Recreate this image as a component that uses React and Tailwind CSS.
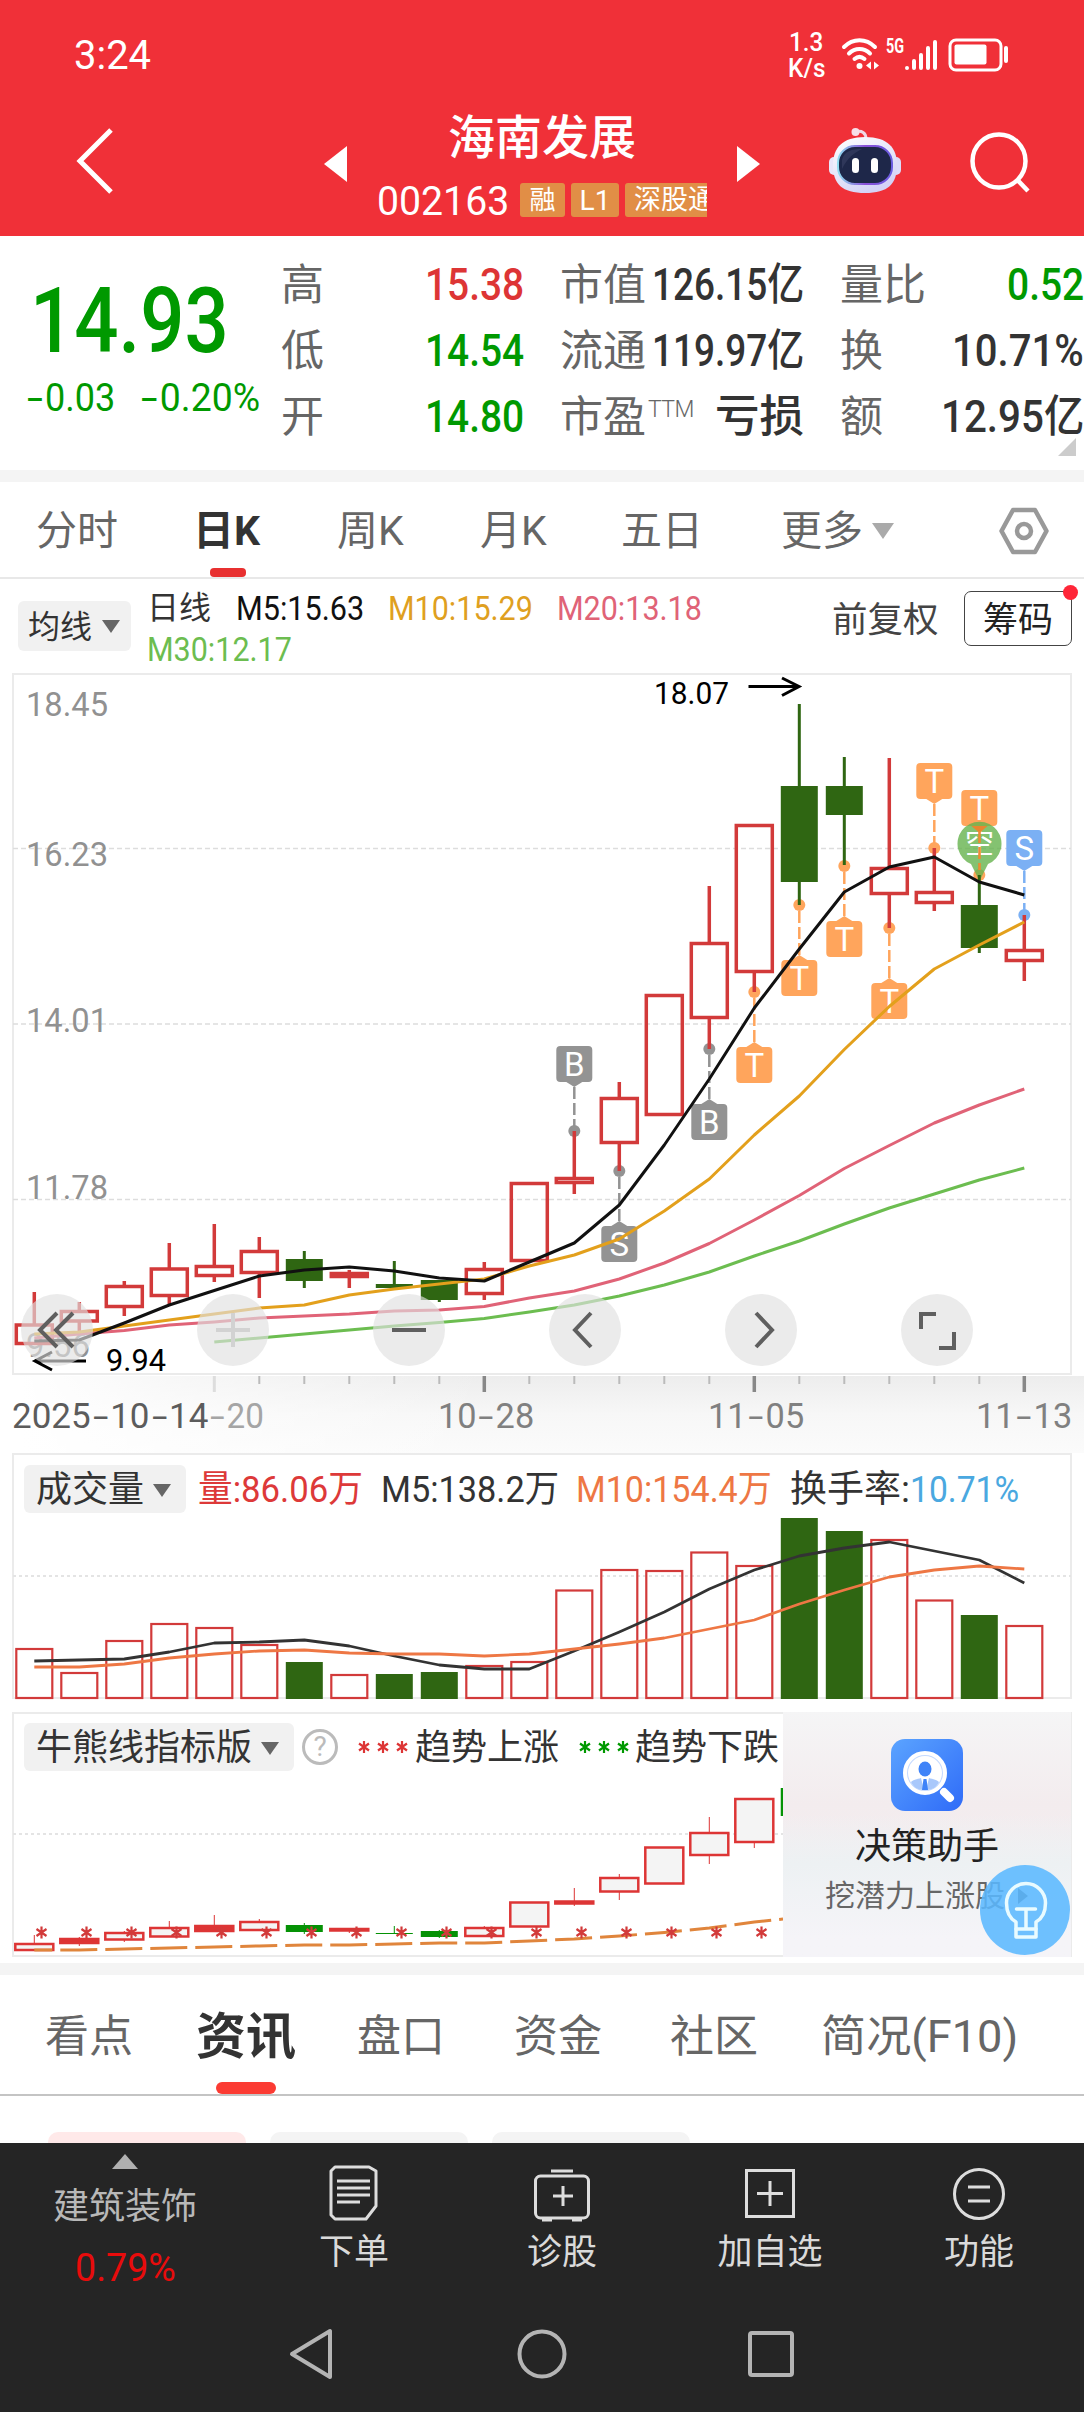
import { useLayoutEffect, useRef, useState } from 'react';

// candle: [high, bodyTop, bodyBottom, low, kind]
const CANDLES = [
  [1292, 1325, 1343.5, 1344, 'up'],
  [1302, 1311.5, 1321, 1331, 'up'],
  [1281, 1286.5, 1306.5, 1316, 'up'],
  [1243, 1269, 1295.5, 1304, 'up'],
  [1224, 1266.5, 1275.5, 1282, 'up'],
  [1237, 1251.5, 1272.5, 1298, 'up'],
  [1251, 1259, 1281, 1288, 'down'],
  [1270, 1273.5, 1276.5, 1288, 'up'],
  [1261, 1284, 1288, 1290, 'down'],
  [1280, 1280, 1300, 1302, 'down'],
  [1262, 1269.5, 1293.5, 1300, 'up'],
  [1183, 1183.5, 1260.5, 1261, 'up'],
  [1131, 1178.5, 1182.5, 1194, 'up'],
  [1082, 1098.5, 1142.5, 1171, 'up'],
  [995, 995.5, 1114.5, 1115, 'up'],
  [886, 943.5, 1017.5, 1049, 'up'],
  [825, 825.5, 971.5, 992, 'up'],
  [704, 786, 882, 905, 'down'],
  [757, 786, 815, 865, 'down'],
  [758, 868.5, 893.5, 928, 'up'],
  [848, 892.5, 902.5, 911, 'up'],
  [875, 905, 948, 953, 'down'],
  [915, 950.5, 960.5, 981, 'up'],
];

const M5 = [1341, 1340, 1323, 1305, 1290.5, 1276, 1270, 1267, 1271, 1278, 1281, 1262, 1243, 1205, 1145, 1079, 1008, 949, 892, 867, 857, 882, 895];
const M10 = [1334, 1332, 1326, 1320, 1314, 1308, 1305, 1295, 1289, 1284, 1279, 1266, 1255, 1239, 1211, 1179, 1135, 1096, 1049.5, 1006.5, 969, 945, 922];
const M20 = [1338, 1334, 1330.5, 1325, 1322, 1318, 1316, 1314, 1311, 1310, 1306.5, 1298, 1291, 1279, 1263, 1243.5, 1220, 1195.5, 1168.5, 1145.5, 1123, 1105, 1089];
const M30 = [null, null, null, null, 1342, 1338, 1334, 1330, 1326, 1322.5, 1318.5, 1312, 1305, 1296, 1285, 1272, 1256, 1241, 1224, 1208, 1194, 1180, 1168];

const VOLUMES = [1649, 1673, 1641, 1624, 1628, 1645, 1662, 1675, 1674, 1672, 1666, 1662, 1590.5, 1570, 1571, 1552.5, 1566, 1518, 1531, 1540, 1600.5, 1615, 1626];
const V5 = [1661, 1660, 1659, 1652, 1643, 1642, 1640, 1646, 1656, 1665, 1669, 1669, 1651, 1632, 1612, 1589, 1570, 1556, 1548, 1542, 1551, 1560, 1583];
const V10 = [1667, 1667, 1664, 1658, 1654, 1651, 1650, 1653, 1654, 1654, 1656, 1654, 1649, 1644, 1638, 1629, 1620, 1604, 1590, 1577, 1570, 1566, 1569];

const TREND = [
  [1935, 1944, 1950, 1950, 'up'],
  [1937, 1939, 1943, 1946, 'full'],
  [1931, 1933, 1939.5, 1942, 'up'],
  [1921, 1928, 1936.5, 1937, 'up'],
  [1915, 1926, 1931, 1932, 'full'],
  [1919, 1922, 1930, 1931, 'up'],
  [1923, 1925, 1932, 1934, 'down'],
  [1928, 1929, 1930.5, 1933, 'full'],
  [1926, 1933, 1934, 1934, 'down'],
  [1930, 1931, 1937, 1938, 'down'],
  [1926, 1928, 1936, 1937, 'up'],
  [1902, 1902.5, 1926.5, 1927, 'up'],
  [1888, 1901.5, 1903.5, 1906, 'full'],
  [1874, 1878, 1891.5, 1900, 'up'],
  [1847, 1847.5, 1883.5, 1884, 'up'],
  [1817, 1833, 1855, 1864, 'up'],
  [1798, 1799, 1842, 1848, 'up'],
];
const BULL = [1950, 1950, 1949, 1948, 1947, 1946, 1945, 1945, 1944, 1943, 1943, 1941, 1939, 1936, 1932.5, 1928, 1922];

const MARKERS = [
  { i: 12, top: 1046, dot: 1131, text: 'B', color: '#939393' },
  { i: 13, top: 1226, dot: 1171, text: 'S', color: '#939393' },
  { i: 15, top: 1104, dot: 1049, text: 'B', color: '#939393' },
  { i: 16, top: 1047, dot: 992, text: 'T', color: '#ffa55c' },
  { i: 17, top: 960, dot: 905, text: 'T', color: '#ffa55c' },
  { i: 18, top: 921, dot: 866, text: 'T', color: '#ffa55c' },
  { i: 19, top: 983, dot: 928, text: 'T', color: '#ffa55c' },
  { i: 20, top: 763, dot: 848, text: 'T', color: '#ffa55c' },
  { i: 21, top: 790, dot: 875, text: 'T', color: '#ffa55c' },
  { i: 22, top: 830, dot: 915, text: 'S', color: '#7bb0f4' },
];

const RED = '#d23a3a';
const GREEN = '#2f6612';
const xAt = (i) => 34.3 + i * 45;
const toPoints = (ys) => ys.map((y, i) => (y === null ? null : `${xAt(i)},${y}`)).filter(Boolean).join(' ');

// squeezes its text to the width of the box, like a condensed number font
function Fit({ className = '', children }) {
  const box = useRef(null);
  const inner = useRef(null);
  const [scale, setScale] = useState(1);

  useLayoutEffect(() => {
    setScale(box.current.clientWidth / inner.current.offsetWidth);
  }, []);

  return (
    <span ref={box} className={`block shrink-0 leading-none ${className}`}>
      <span ref={inner} className="inline-block origin-left whitespace-nowrap" style={{ transform: `scaleX(${scale})` }}>
        {children}
      </span>
    </span>
  );
}

function Dash() {
  return <span className="inline-block scale-x-[1.6] px-[0.14em]">-</span>;
}

function Caret({ className = '' }) {
  return (
    <svg viewBox="0 0 18 13" className={`shrink-0 ${className}`}>
      <path d="M0 0H18L9 13Z" fill="currentColor" />
    </svg>
  );
}

function StatusBar() {
  return (
    <div className="h-[108px] flex items-center pt-[2px]">
      <Fit className="ml-[74px] w-[77px] text-[41px]">3:24</Fit>
      <div className="ml-[637px] w-[38px] flex flex-col gap-px">
        <Fit className="ml-px w-[34px] text-[25px] leading-[20px] font-medium">1.3</Fit>
        <Fit className="w-[37px] text-[25px] leading-[20px] font-medium">K/s</Fit>
      </div>
      <svg viewBox="0 0 40 34" className="ml-[15px] w-[40px] h-[34px]" fill="none" stroke="#fff" strokeWidth="4" strokeLinecap="round">
        <path d="M3 9C12 0 25 0 34 9" />
        <path d="M8 15.500C14 9.500 23 9.500 29 15.500" />
        <path d="M13.500 21C17 18 20 18 23.500 21" />
        <circle cx="18.500" cy="28" r="3" fill="#fff" stroke="none" />
        <path d="M30 23.500V31.500L25 27.500ZM33 23.500V31.500L38 27.500Z" fill="#fff" stroke="none" />
      </svg>
      <Fit className="ml-[5px] w-[18px] text-[20px] font-bold -mt-[18px]">5G</Fit>
      <svg viewBox="0 0 34 32" className="w-[34px] h-[32px]" fill="none" stroke="#fff" strokeWidth="4" strokeLinecap="round">
        <path d="M3 29V29M10 22V29M17 16V29M24 9V29M31 3V29" />
      </svg>
      <svg viewBox="0 0 62 34" className="ml-[10px] w-[62px] h-[34px]">
        <rect x="2" y="2" width="51" height="30" rx="6" fill="none" stroke="#fff" strokeWidth="3" />
        <rect x="6.500" y="6.500" width="32" height="20" rx="2" fill="#fff" />
        <rect x="56" y="8" width="4" height="17" rx="2" fill="#fff" />
      </svg>
    </div>
  );
}

function Robot() {
  return (
    <svg viewBox="0 0 74 68" className="ml-[68px] w-[74px] h-[68px] shrink-0">
      <defs>
        <linearGradient id="shell" x1="0" y1="0" x2="0.500" y2="1">
          <stop offset="0" stopColor="#fff" />
          <stop offset="1" stopColor="#d4d3f6" />
        </linearGradient>
        <linearGradient id="rim" x1="0" y1="0.500" x2="1" y2="0.500">
          <stop offset="0" stopColor="#8fdcf0" />
          <stop offset="0.500" stopColor="#8a4fd8" />
          <stop offset="1" stopColor="#6a5ce0" />
        </linearGradient>
      </defs>
      <path d="M27 5C34 3 38 6 38 12" fill="none" stroke="#f0d8e6" strokeWidth="3" />
      <circle cx="27.500" cy="5" r="4" fill="#f7dfe8" />
      <rect x="1" y="30" width="10" height="18" rx="5" fill="#e8e6fa" />
      <rect x="63" y="30" width="10" height="18" rx="5" fill="#dcdcfa" />
      <path d="M37 10C60 10 69 21 69 38C69 57 60 66 37 66C14 66 5 57 5 38C5 21 14 10 37 10Z" fill="url(#shell)" />
      <rect x="10" y="19" width="54" height="38" rx="17" fill="#1e2749" stroke="url(#rim)" strokeWidth="2" />
      <path d="M14 33C16 24 24 22 34 22C26 26 20 30 14 42Z" fill="#3a4366" opacity="0.6" />
      <rect x="24" y="31" width="7" height="15" rx="3.500" fill="#fff" />
      <rect x="43" y="31" width="7" height="15" rx="3.500" fill="#fff" />
    </svg>
  );
}

function NavBar() {
  return (
    <div className="h-[106px] flex items-center">
      <svg viewBox="0 0 40 66" className="ml-[75px] w-[40px] h-[66px] shrink-0" fill="none" stroke="#fff" strokeWidth="5">
        <path d="M36 2L5 33L36 64" />
      </svg>
      <svg viewBox="0 0 23 36" className="ml-[209px] mt-[6px] w-[23px] h-[36px] shrink-0">
        <path d="M23 0V36L0 18Z" fill="#fff" />
      </svg>
      <div className="ml-[30px] w-[330px] h-[112px] -mb-[6px] flex flex-col">
        <div className="h-[58px] flex items-center justify-center text-[47px] leading-none font-medium whitespace-nowrap">海南发展</div>
        <div className="mt-[15px] h-[38px] flex items-center gap-[6px] overflow-hidden">
          <Fit className="w-[132px] mr-[5px] mt-[2px] text-[41px]">002163</Fit>
          <span className="shrink-0 w-[45px] h-[34px] rounded-[3px] bg-[#e18e46] text-[26px] leading-[35px] text-center">融</span>
          <span className="shrink-0 w-[48px] h-[34px] rounded-[3px] bg-[#e18e46] text-[28px] leading-[35px] text-center">L1</span>
          <span className="shrink-0 w-[95px] h-[34px] rounded-[3px] bg-[#e18e46] text-[27px] leading-[35px] pl-[9px] whitespace-nowrap">深股通</span>
        </div>
      </div>
      <svg viewBox="0 0 23 36" className="ml-[30px] mt-[6px] w-[23px] h-[36px] shrink-0">
        <path d="M0 0V36L23 18Z" fill="#fff" />
      </svg>
      <Robot />
      <svg viewBox="0 0 62 62" className="ml-[67px] mt-[2px] w-[62px] h-[62px] shrink-0" fill="none" stroke="#fff" strokeWidth="4.500">
        <circle cx="30" cy="30" r="26.500" />
        <path d="M48.500 49L59 60" />
      </svg>
    </div>
  );
}

function QuoteRow({ label, sup, value, color, width }) {
  return (
    <div className="h-[66px] flex items-center justify-between">
      <span className="flex items-start text-[43px] leading-none text-[#666] whitespace-nowrap">
        {label}
        {sup && <span className="ml-[2px] mt-[2px] text-[23px] leading-none font-light tracking-tight">{sup}</span>}
      </span>
      <Fit className={`${width} ${color} text-[44px] font-medium`}>{value}</Fit>
    </div>
  );
}

function Quote() {
  return (
    <div className="relative h-[234px] flex bg-white">
      <div className="w-[281px] text-[#009900]">
        <Fit className="ml-[30px] mt-[41px] w-[199px] text-[90px] font-medium">14.93</Fit>
        <div className="mt-[12px] flex">
          <Fit className="ml-[25px] w-[90px] text-[38px]"><Dash />0.03</Fit>
          <Fit className="ml-[24px] w-[121px] text-[38px]"><Dash />0.20%</Fit>
        </div>
      </div>
      <div className="w-[243px] pt-[16px]">
        <QuoteRow label="高" value="15.38" color="text-[#dd3535]" width="w-[99px]" />
        <QuoteRow label="低" value="14.54" color="text-[#009900]" width="w-[99px]" />
        <QuoteRow label="开" value="14.80" color="text-[#009900]" width="w-[99px]" />
      </div>
      <div className="ml-[36px] w-[244px] pt-[16px]">
        <QuoteRow label="市值" value="126.15亿" color="text-[#333]" width="w-[152px]" />
        <QuoteRow label="流通" value="119.97亿" color="text-[#333]" width="w-[152px]" />
        <QuoteRow label="市盈" sup="TTM" value="亏损" color="text-[#333]" width="w-[89px]" />
      </div>
      <div className="ml-[36px] w-[244px] pt-[16px]">
        <QuoteRow label="量比" value="0.52" color="text-[#009900]" width="w-[77px]" />
        <QuoteRow label="换" value="10.71%" color="text-[#333]" width="w-[132px]" />
        <QuoteRow label="额" value="12.95亿" color="text-[#333]" width="w-[143px]" />
      </div>
      <svg viewBox="0 0 18 18" className="absolute right-[8px] bottom-[14px] w-[18px] h-[18px]">
        <path d="M18 0V18H0Z" fill="#ccc" />
      </svg>
    </div>
  );
}

function PeriodTabs() {
  return (
    <div className="h-[97px] flex items-center pt-[3px] border-b-2 border-[#e8e8e8] bg-white text-[41px] leading-none text-[#666] whitespace-nowrap">
      <span className="ml-[36px] w-[157px]">分时</span>
      <span className="relative w-[144px] h-full flex items-center font-bold text-[#333]">
        日K
        <span className="absolute left-[17px] bottom-0 w-[36px] h-[9px] rounded-[4px] bg-[#e83030]" />
      </span>
      <span className="w-[143px]">周K</span>
      <span className="w-[141px]">月K</span>
      <span className="w-[160px]">五日</span>
      <span>更多</span>
      <Caret className="ml-[9px] w-[22px] h-[18px] text-[#aaa]" />
      <svg viewBox="0 0 50 48" className="ml-[105px] w-[50px] h-[48px]" fill="none" stroke="#999" strokeWidth="4.500" strokeLinejoin="round">
        <path d="M14 3H36L47.500 24L36 45H14L2.500 24Z" />
        <circle cx="25" cy="24" r="7" />
      </svg>
    </div>
  );
}

function AverageRow() {
  return (
    <div className="h-[93px] flex bg-white">
      <div className="ml-[18px] mt-[22px] w-[113px] h-[50px] rounded-[6px] bg-[#f1f1f1] flex items-center pl-[10px]">
        <span className="mt-px text-[32px] leading-none text-[#333] whitespace-nowrap">均线</span>
        <Caret className="ml-[10px] w-[18px] h-[13px] text-[#666]" />
      </div>
      <div className="ml-[16px] w-[665px] pt-[13px] text-[33px]">
        <div className="h-[41px] flex">
          <Fit className="w-[64px] text-[32px] text-[#333]">日线</Fit>
          <Fit className="ml-[25px] w-[128px] text-[#111]">M5:15.63</Fit>
          <Fit className="ml-[24px] w-[145px] text-[#dfa01f]">M10:15.29</Fit>
          <Fit className="ml-[24px] w-[145px] text-[#e06377]">M20:13.18</Fit>
        </div>
        <Fit className="w-[145px] text-[#6cbd50]">M30:12.17</Fit>
      </div>
      <span className="ml-[20px] mt-[24px] text-[35.5px] leading-none text-[#444] whitespace-nowrap">前复权</span>
      <span className="relative ml-auto mr-[12px] mt-[12px] w-[108px] h-[55px] rounded-[7px] border-[1.5px] border-[#444] flex items-center justify-center pt-[3px] text-[35px] leading-none text-[#222] whitespace-nowrap">
        筹码
        <span className="absolute -top-[7px] -right-[7px] w-[15px] h-[15px] rounded-full bg-[#ff2638]" />
      </span>
    </div>
  );
}

function Candle({ i, data }) {
  const [high, top, bottom, low, kind] = data;
  const x = xAt(i);
  if (kind === 'down') {
    return (
      <g fill={GREEN}>
        <rect x={x - 1.5} y={high} width="3" height={low - high} />
        <rect x={x - 18.5} y={top} width="37" height={bottom - top} />
      </g>
    );
  }
  return (
    <g stroke={RED} strokeWidth="3.500">
      <path d={`M${x} ${high}V${top}M${x} ${bottom}V${low}`} />
      <rect x={x - 18} y={top} width="36" height={bottom - top} fill="none" />
    </g>
  );
}

function Marker({ i, top, dot, text, color }) {
  const x = xAt(i);
  const above = top < dot;
  const from = above ? top + 36 : top;
  const tip = above ? from + 5 : from - 5;
  return (
    <g>
      <path d={`M${x} ${tip}V${dot}`} stroke={color} strokeWidth="2.500" strokeDasharray="12 4" />
      <circle cx={x} cy={dot} r="6" fill={color} />
      <rect x={x - 18} y={top} width="36" height="36" rx="4" fill={color} />
      <path d={`M${x - 8} ${from}L${x} ${tip}L${x + 8} ${from}Z`} fill={color} />
      <text x={x} y={top + 30} textAnchor="middle" fontSize="33" fill="#fff">{text}</text>
    </g>
  );
}

function AxisText({ y, children }) {
  return (
    <text x="26" y={y} fontSize="34" fill="#919191" textLength={children.length > 4 ? 82 : 64} lengthAdjust="spacingAndGlyphs">
      {children}
    </text>
  );
}

function RoundButton({ className = '', children }) {
  return (
    <button className={`w-[72px] h-[72px] rounded-full bg-[#e0e0e0]/65 flex items-center justify-center ${className}`}>
      <svg viewBox="0 0 72 72" className="w-full h-full" fill="none" stroke="#5f5f5f" strokeWidth="4">
        {children}
      </svg>
    </button>
  );
}

function PriceChart() {
  return (
    <div className="relative h-[704px] bg-white">
      <svg viewBox="0 672 1084 704" className="block w-full h-full" fontFamily="Roboto, sans-serif">
        <rect x="13" y="674" width="1058" height="700" fill="none" stroke="#ebebeb" strokeWidth="2" />
        <path d="M13 848.500H1071M13 1024H1071M13 1199.500H1071" stroke="#ddd" strokeWidth="1.500" strokeDasharray="5 3" />
        <AxisText y="716">18.45</AxisText>
        <AxisText y="866">16.23</AxisText>
        <AxisText y="1032">14.01</AxisText>
        <AxisText y="1199">11.78</AxisText>
        <AxisText y="1357">9.56</AxisText>
        {MARKERS.map((m) => <Marker key={m.i} {...m} />)}
        <g opacity="0.8">
          <path d="M979.500 881L971 864A22 22 0 1 1 988 864Z" fill="#66b34e" />
          <text x="979.500" y="854" textAnchor="middle" fontSize="29" fill="#fff" fontFamily="'Noto Sans CJK SC', sans-serif">空</text>
        </g>
        <path d="M971.500 826L979.500 833L987.500 826Z" fill="#e8862f" />
        <path d="M979.500 831V870" stroke="#f08a35" strokeWidth="2.500" strokeDasharray="12 4" />
        {CANDLES.map((c, i) => <Candle key={i} i={i} data={c} />)}
        <g fill="none" strokeWidth="3" strokeLinejoin="round">
          <polyline points={toPoints(M30)} stroke="#6cbd50" />
          <polyline points={toPoints(M20)} stroke="#e06377" />
          <polyline points={toPoints(M10)} stroke="#e3a01c" />
          <polyline points={toPoints(M5)} stroke="#111" />
        </g>
        <g fill="none" stroke="#000" strokeWidth="3">
          <path d="M748.500 686.500H799M782 678L799 686.500L782 695.500" />
          <path d="M86 1361H35M52 1352L35 1361L52 1370" />
        </g>
        <text x="654" y="704" fontSize="31" textLength="75" lengthAdjust="spacingAndGlyphs">18.07</text>
        <text x="106" y="1371" fontSize="31" textLength="60" lengthAdjust="spacingAndGlyphs">9.94</text>
      </svg>
      <div className="absolute left-[21px] top-[622px] flex">
        <RoundButton><path d="M36 19L19 36L36 53M52 19L35 36L52 53" /></RoundButton>
        <RoundButton className="ml-[104px]"><path d="M36 19V53M19 36H53" stroke="#d2d2d2" /></RoundButton>
        <RoundButton className="ml-[104px]"><path d="M19 36H53" /></RoundButton>
        <RoundButton className="ml-[104px]"><path d="M42 19L26 36L42 53" /></RoundButton>
        <RoundButton className="ml-[104px]"><path d="M31 19L47 36L31 53" /></RoundButton>
        <RoundButton className="ml-[104px]"><path d="M20 35V20H35M38 54H53V38" /></RoundButton>
      </div>
    </div>
  );
}

function DateAxis() {
  return (
    <div className="h-[77px] bg-linear-to-b from-[#ededed] via-[#f7f7f7] to-[#fbfbfb]">
      <div className="h-full bg-linear-to-r from-white from-[2%] via-white/60 via-[15%] to-transparent to-[45%]">
        <svg viewBox="0 1376 1084 16" className="block w-full h-[16px]" stroke="#bbb" strokeWidth="2">
          {CANDLES.map((_, i) => i > 4 && i % 6 !== 4 && <path key={i} d={`M${xAt(i)} 1376V1384`} />)}
          <path d={`M${xAt(4)} 1376V1392`} stroke="#ddd" strokeWidth="3" />
          <path d={`M${xAt(10)} 1376V1392M${xAt(16)} 1376V1392M${xAt(22)} 1376V1392`} stroke="#888" strokeWidth="3.500" />
        </svg>
        <div className="mt-[7px] flex text-[35px] text-[#808080]">
          <Fit className="ml-[12px] w-[196px] text-[#5c5c5c]">2025<Dash />10<Dash />14</Fit>
          <Fit className="w-[56px] text-[#a5a5a5]"><Dash />20</Fit>
          <Fit className="ml-[174px] w-[96px]">10<Dash />28</Fit>
          <Fit className="ml-[174px] w-[96px]">11<Dash />05</Fit>
          <Fit className="ml-[172px] w-[96px]">11<Dash />13</Fit>
        </div>
      </div>
    </div>
  );
}

function VolumePanel() {
  return (
    <div className="relative h-[259px] bg-white">
      <svg viewBox="0 1453 1084 259" className="block w-full h-full">
        <rect x="13" y="1454" width="1058" height="244" fill="none" stroke="#ebebeb" strokeWidth="2" />
        <path d="M13 1576H1071" stroke="#e4e4e4" strokeWidth="2" strokeDasharray="3 3" />
        {VOLUMES.map((y, i) =>
          CANDLES[i][4] === 'down' ? (
            <rect key={i} x={xAt(i) - 18.5} y={y} width="37" height={1699 - y} fill={GREEN} />
          ) : (
            <rect key={i} x={xAt(i) - 18} y={y} width="36" height={1698 - y} fill="none" stroke={RED} strokeWidth="2.200" />
          )
        )}
        <g fill="none" strokeWidth="2.800" strokeLinejoin="round">
          <polyline points={toPoints(V5)} stroke="#333" />
          <polyline points={toPoints(V10)} stroke="#ee7744" />
        </g>
      </svg>
      <div className="absolute left-[24px] top-[12px] h-[48px] flex items-center text-[37px] whitespace-nowrap">
        <div className="w-[162px] h-full rounded-[6px] bg-[#f1f1f1] flex items-center pl-[12px] pt-[2px] text-[36px] leading-none text-[#333]">
          成交量
          <Caret className="ml-[9px] w-[18px] h-[13px] text-[#666]" />
        </div>
        <Fit className="ml-[12px] mt-px w-[165px] text-[#dd3939]">量:86.06万</Fit>
        <Fit className="ml-[18px] mt-px w-[178px] text-[#333]">M5:138.2万</Fit>
        <Fit className="ml-[17px] mt-px w-[196px] text-[#ee7744]">M10:154.4万</Fit>
        <Fit className="ml-[18px] mt-px w-[120px] text-[#333]">换手率:</Fit>
        <Fit className="mt-px w-[109px] text-[#4aa8e0]">10.71%</Fit>
      </div>
    </div>
  );
}

function Star({ x, y, color = RED }) {
  return <path d={`M${x} ${y - 6}V${y + 6}M${x - 5} ${y - 3.5}L${x + 5} ${y + 3.5}M${x + 5} ${y - 3.5}L${x - 5} ${y + 3.5}`} stroke={color} strokeWidth="2.200" />;
}

function TrendCard() {
  return (
    <div className="absolute left-[783px] top-0 w-[288px] h-[245px] bg-linear-to-b from-[#f5f5f6] via-[#f3ecee] via-[38%] to-[#f5f4f8] flex flex-col items-center">
      <div className="absolute inset-0 bg-linear-to-b from-transparent from-[42%] via-[#edf1f3] via-[62%] to-[#f5f4f8] to-[92%]" />
      <svg viewBox="0 0 72 72" className="relative mt-[27px] w-[72px] h-[72px]">
        <defs>
          <linearGradient id="card" x1="0" y1="0" x2="1" y2="1">
            <stop offset="0" stopColor="#5ba4ff" />
            <stop offset="1" stopColor="#2f6bf8" />
          </linearGradient>
        </defs>
        <rect width="72" height="72" rx="14" fill="url(#card)" />
        <circle cx="34" cy="34" r="20" fill="#c3d9ff" stroke="#fff" strokeWidth="4" />
        <circle cx="34" cy="34" r="17" fill="#fff" />
        <ellipse cx="34" cy="30" rx="6.500" ry="7.500" fill="#3f83f8" />
        <path d="M20 43C23 40 28 40 30 39L33 51C27 51 22 48 20 43ZM48 43C45 40 40 40 38 39L35 51C41 51 46 48 48 43Z" fill="#a9c8fb" />
        <path d="M32.500 40H35.500L37 51H31Z" fill="#3f83f8" />
        <path d="M53 53L59 59" stroke="#fff" strokeWidth="8" strokeLinecap="round" />
      </svg>
      <span className="relative mt-[18px] text-[36px] leading-none text-[#222] whitespace-nowrap">决策助手</span>
      <span className="relative mt-[16px] self-start ml-[42px] flex items-center text-[30px] leading-none text-[#666] whitespace-nowrap">
        挖潜力上涨股
        <svg viewBox="0 0 10 16" className="ml-[13px] w-[10px] h-[16px]"><path d="M0 0L10 8L0 16Z" fill="#666" /></svg>
      </span>
      <svg viewBox="0 0 90 90" className="absolute left-[197px] top-[153px] w-[90px] h-[90px]">
        <circle cx="45" cy="45" r="45" fill="#5ab8ff" opacity="0.87" />
        <g fill="none" stroke="#e9fbff" strokeWidth="3.500" strokeLinejoin="round" strokeLinecap="round">
          <path d="M36 72V57C29 53 26.500 45 26.500 38A19.500 19.500 0 1 1 65.500 38C65.500 45 63 53 56 57V72Z" />
          <path d="M36 64H56M36.500 44H55.500M46 44V63" />
        </g>
      </svg>
    </div>
  );
}

function TrendPanel() {
  return (
    <div className="relative h-[251px] bg-white">
      <svg viewBox="0 1712 1084 251" className="block w-full h-full">
        <rect x="13" y="1713" width="1058" height="243" fill="none" stroke="#ebebeb" strokeWidth="2" />
        <path d="M13 1834H1071" stroke="#e4e4e4" strokeWidth="2" strokeDasharray="3 3" />
        {TREND.map(([high, top, bottom, low, kind], i) => {
          const x = xAt(i);
          const color = kind === 'down' ? '#059205' : '#dd3535';
          return (
            <g key={i}>
              <path d={`M${x} ${high}V${low}`} stroke={color} />
              {kind === 'down' ? (
                <rect x={x - 18.5} y={top} width="37" height={bottom - top} fill={color} />
              ) : (
                <rect x={x - 19} y={top} width="38" height={bottom - top} fill={kind === 'up' ? '#f4f4f4' : color} stroke={color} strokeWidth="2.500" />
              )}
            </g>
          );
        })}
        <polyline points={`${toPoints(BULL)} 783,1919`} fill="none" stroke="#e0853c" strokeWidth="3" strokeDasharray="37 8" strokeDashoffset="19" />
        {BULL.map((_, i) => <Star key={i} x={41.5 + i * 45} y={1932.5} />)}
        <path d="M782 1788V1816" stroke="#059205" strokeWidth="2.500" />
      </svg>
      <div className="absolute left-[24px] top-[11px] h-[48px] flex items-center text-[36px] leading-none text-[#333] whitespace-nowrap">
        <div className="w-[270px] h-full rounded-[6px] bg-[#f1f1f1] flex items-center pl-[12px] pt-[2px]">
          牛熊线指标版
          <Caret className="ml-[9px] w-[18px] h-[13px] text-[#666]" />
        </div>
        <span className="ml-[8px] w-[36px] h-[36px] rounded-full border-[3px] border-[#bbb] flex items-center justify-center text-[28px] text-[#bbb]">?</span>
        <svg viewBox="0 0 56 16" className="ml-[18px] w-[56px] h-[16px]">
          <Star x={8} y={8} color="#dd3535" />
          <Star x={27} y={8} color="#dd3535" />
          <Star x={46} y={8} color="#dd3535" />
        </svg>
        <span className="ml-[3px] mt-[2px]">趋势上涨</span>
        <svg viewBox="0 0 56 16" className="ml-[18px] w-[56px] h-[16px]">
          <Star x={8} y={8} color="#009900" />
          <Star x={27} y={8} color="#009900" />
          <Star x={46} y={8} color="#009900" />
        </svg>
        <span className="ml-[2px] mt-[2px]">趋势下跌</span>
      </div>
      <TrendCard />
    </div>
  );
}

function InfoTabs() {
  return (
    <div className="h-[121px] flex items-center pt-[4px] border-b-2 border-[#c4c4c4] bg-white text-[44px] leading-none text-[#666] whitespace-nowrap">
      <span className="ml-[45px] w-[151px]">看点</span>
      <span className="relative w-[161px] h-full flex items-center text-[50px] font-bold text-[#333]">
        资讯
        <span className="absolute left-[20px] bottom-0 w-[60px] h-[12px] rounded-[6px] bg-[#fb3b33]" />
      </span>
      <span className="w-[157px]">盘口</span>
      <span className="w-[156px]">资金</span>
      <span className="w-[151px]">社区</span>
      <Fit className="w-[197px]">简况(F10)</Fit>
    </div>
  );
}

function BottomItem({ label, className, children }) {
  return (
    <div className={`flex flex-col items-center ${className}`}>
      <svg viewBox="0 0 60 60" className="mt-[21px] w-[60px] h-[60px]" fill="none" stroke="#ddd" strokeWidth="3">
        {children}
      </svg>
      <span className="mt-[11px] text-[35px] leading-none text-[#dadada] whitespace-nowrap">{label}</span>
    </div>
  );
}

function BottomBar() {
  return (
    <div className="h-[152px] flex">
      <div className="w-[250px] flex flex-col items-center">
        <svg viewBox="0 0 26 15" className="mt-[11px] w-[26px] h-[15px]"><path d="M0 15H26L13 0Z" fill="#b0b0b0" /></svg>
        <span className="mt-[20px] text-[36px] leading-none text-[#b8b8b8] whitespace-nowrap">建筑装饰</span>
        <Fit className="mt-[24px] w-[101px] text-[38px] text-[#e80c0c]">0.79%</Fit>
      </div>
      <BottomItem label="下单" className="w-[208px]">
        <path d="M11 3H45L52 7V42L42 55H11L7 51V7Z" strokeLinejoin="round" />
        <path d="M13 17H46M13 24H46M13 31H46M13 38H36" />
      </BottomItem>
      <BottomItem label="诊股" className="w-[208px]">
        <rect x="3.500" y="12" width="53" height="42" rx="5" />
        <path d="M19 7H41M31 22V42M21 32H41M10 56H20M40 56H50" />
      </BottomItem>
      <BottomItem label="加自选" className="w-[208px]">
        <rect x="6.500" y="6.500" width="47" height="46" />
        <path d="M30 17V42M17 29.500H43" />
      </BottomItem>
      <BottomItem label="功能" className="w-[210px]">
        <circle cx="30" cy="30" r="24.500" />
        <path d="M19 23H41M19 37H41" />
      </BottomItem>
    </div>
  );
}

function SystemNav() {
  return (
    <div className="h-[117px] flex items-center">
      <svg viewBox="0 0 46 52" className="ml-[288px] w-[46px] h-[52px]" fill="none" stroke="#b4b4b4" strokeWidth="4" strokeLinejoin="round">
        <path d="M42 3V49L4 26Z" />
      </svg>
      <svg viewBox="0 0 50 50" className="ml-[183px] w-[50px] h-[50px]" fill="none" stroke="#b4b4b4" strokeWidth="4">
        <circle cx="25" cy="25" r="22.500" />
      </svg>
      <span className="ml-[181px] w-[46px] h-[46px] rounded-[4px] border-4 border-[#b4b4b4]" />
    </div>
  );
}

export default function App() {
  return (
    <div className="w-[1084px] h-[2412px] flex flex-col overflow-hidden bg-white font-['Roboto','Noto_Sans_CJK_SC',sans-serif]">
      <header className="h-[236px] shrink-0 bg-[#f03038] text-white">
        <StatusBar />
        <NavBar />
      </header>
      <Quote />
      <div className="h-[12px] bg-[#f4f4f4]" />
      <PeriodTabs />
      <AverageRow />
      <PriceChart />
      <DateAxis />
      <VolumePanel />
      <TrendPanel />
      <div className="h-[12px] bg-[#f4f4f4]" />
      <InfoTabs />
      <div className="h-[47px] flex items-end gap-[24px] pl-[48px] bg-white">
        <div className="w-[198px] h-[11px] rounded-t-[10px] bg-[#ffe9e9]" />
        <div className="w-[198px] h-[11px] rounded-t-[10px] bg-[#f4f4f4]" />
        <div className="w-[198px] h-[11px] rounded-t-[10px] bg-[#f4f4f4]" />
      </div>
      <footer className="h-[269px] shrink-0 bg-[#252525]">
        <BottomBar />
        <SystemNav />
      </footer>
    </div>
  );
}
